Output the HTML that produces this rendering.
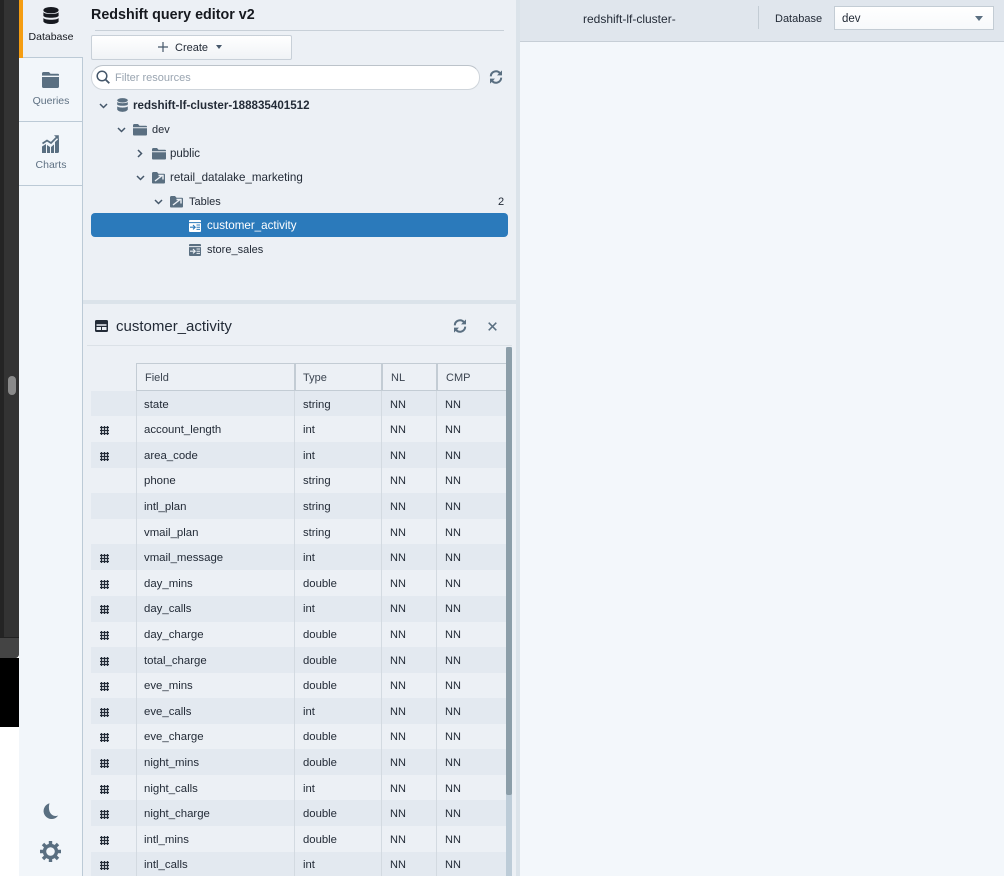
<!DOCTYPE html>
<html><head><meta charset="utf-8"><title>Redshift query editor v2</title>
<style>
html,body{margin:0;padding:0;width:1004px;height:876px;overflow:hidden;background:#fff}
body{position:relative;font-family:"Liberation Sans",sans-serif;font-size:11px;color:#16191f}
.a,.t,svg.a{position:absolute}
.t{white-space:nowrap;line-height:14px;margin-top:1px}
.r{position:absolute;left:91px;width:415px;height:26px}
.s{background:#e3e9f0}
.r span{position:absolute;top:7px;line-height:14px;white-space:nowrap;color:#232b37}
.r.k span{top:6px}
.r .f{left:53px;font-size:11.4px}.r .y{left:212px;font-size:11.3px}.r .n{left:299px}.r .c{left:354px}
.r svg{position:absolute;left:9px;top:10px}
.r.k svg{top:9px}
.h{position:absolute;top:363px;height:26px;border:solid #c3ccd4;border-width:1px 0 2px 0;border-left:1px solid #c3ccd4;background:#ecf0f5}
.h span{position:absolute;left:8px;top:7px;line-height:14px;color:#3b4450}
</style></head><body>
<svg width="0" height="0" style="position:absolute"><defs>
<g id="g"><path d="M1.500 0v9M4.500 0v9M7.500 0v9M0 1.500h9M0 4.500h9M0 7.500h9" stroke="#232b37" stroke-width="1.150" fill="none"/></g>
<g id="f"><path d="M0 1.500C0 .7.500 0 1.300 0H5l1.500 1.700H13c.6 0 1 .4 1 1V3.200H0zM0 4.200h14v6.300c0 .6-.4 1-1 1H1c-.6 0-1-.4-1-1z" fill="#5a6f81"/></g>
<g id="sf"><path d="M0 1.500C0 .7.500 0 1.300 0H5l1.500 1.700H12c.6 0 1 .4 1 1V10.500c0 .6-.4 1-1 1H1c-.6 0-1-.4-1-1z" fill="#5a6f81"/><path d="M3 9 9.500 4M6.500 3.500h4.500V7.500" stroke="#ecf0f5" stroke-width="1.400" fill="none"/></g>
<g id="tb"><rect x="0" y="0" width="12" height="12" rx="1" fill="currentColor"/><path d="M0 2.600h12M7.500 5h3.500M7.500 7.200h3.500M7.500 9.400h3.500" stroke="var(--b)" stroke-width="1"/><path d="M1 7.200h5M4 5l2.200 2.200L4 9.400" stroke="var(--b)" stroke-width="1.100" fill="none"/></g>
<g id="sy"><path d="M1.800 6.400A5.200 5.200 0 0 1 11 3.200M12.200 7.600A5.200 5.200 0 0 1 3 10.800" stroke="#5a6f81" stroke-width="2" fill="none"/><path d="M13 .4v5H8zM1 13.600v-5h5z" fill="#5a6f81"/></g>
</defs></svg>

<!-- dark left strip -->
<div class="a" style="left:0;top:0;width:19px;height:658px;background:#333;border-radius:0 0 4px 0"></div>
<div class="a" style="left:0;top:0;width:4px;height:637px;background:#242424"></div>
<div class="a" style="left:0;top:637px;width:19px;height:1px;background:#222"></div>
<div class="a" style="left:0;top:638px;width:19px;height:20px;background:#444;border-radius:0 0 4px 0"></div>
<div class="a" style="left:0;top:658px;width:19px;height:69px;background:#000"></div>
<div class="a" style="left:8px;top:376px;width:8px;height:19px;background:#8a8a8a;border-radius:4px"></div>

<!-- sidebar -->
<div class="a" style="left:19px;top:0;width:63px;height:876px;background:#f2f6fa"></div>
<div class="a" style="left:82px;top:57px;width:1px;height:819px;background:#bccad6"></div>
<div class="a" style="left:19px;top:0;width:64px;height:57px;background:#ecf0f5"></div>
<div class="a" style="left:19px;top:0;width:4px;height:58px;background:#f59d12"></div>
<div class="a" style="left:23px;top:57px;width:60px;height:1px;background:#bccad6"></div>
<div class="a" style="left:19px;top:121px;width:64px;height:1px;background:#bccad6"></div>
<div class="a" style="left:19px;top:185px;width:64px;height:1px;background:#bccad6"></div>

<svg class="a" style="left:43px;top:7px" width="16" height="18" viewBox="0 0 16 18"><ellipse cx="8" cy="3.200" rx="7.600" ry="3.200" fill="#16191f"/><path d="M.4 5.200C2 7.600 14 7.600 15.600 5.200V9C14 11.400 2 11.400.4 9zM.4 11C2 13.400 14 13.400 15.600 11v3.600C14 17.800 2 17.800.4 14.600z" fill="#16191f"/></svg>
<div class="t" style="left:19px;width:64px;top:29px;text-align:center;font-size:10.500px;color:#16191f">Database</div>
<svg class="a" style="left:42px;top:72px" width="17" height="16" viewBox="0 0 17 16"><path d="M0 1.500C0 .7.600 0 1.400 0H7l1.500 1.800H16c.6 0 1 .4 1 1V3.600H0zM0 5h17v9.500c0 .8-.6 1.500-1.400 1.500H1.400C.6 16 0 15.300 0 14.500z" fill="#5a6f81"/></svg>
<div class="t" style="left:19px;width:64px;top:93px;text-align:center;font-size:10.500px;color:#5f7183">Queries</div>
<svg class="a" style="left:42px;top:135px" width="17" height="18" viewBox="0 0 17 18"><path d="M0 11.500 4 9v9H0zM5 10l3 2v6H5zM9 12l3-2.500V18H9zM13 7l4-3.500V16.500c0 .9-.6 1.500-1.500 1.500H13z" fill="#5a6f81"/><path d="M.5 8.500 5 5.500 9 8l6-6" stroke="#5a6f81" stroke-width="1.700" fill="none"/><path d="M12 .3h4.800v4.700z" fill="#5a6f81"/></svg>
<div class="t" style="left:19px;width:64px;top:157px;text-align:center;font-size:10.500px;color:#5f7183">Charts</div>
<svg class="a" style="left:43px;top:803px" width="16" height="16" viewBox="0 0 16 16"><path d="M6.500.3A8 8 0 1 0 15.200 12.500C10 14.500 4 10 6.500.3z" fill="#5a6f81"/></svg>
<svg class="a" style="left:40px;top:841px" width="21" height="21" viewBox="0 0 21 21"><circle cx="10.500" cy="10.500" r="6" fill="none" stroke="#5a6f81" stroke-width="3.400"/><g stroke="#5a6f81" stroke-width="3.400"><path d="M10.500 0v4M10.500 17v4M0 10.500h4M17 10.500h4M3 3l2.800 2.800M15.200 15.200 18 18M18 3l-2.800 2.800M5.800 15.200 3 18"/></g></svg>

<!-- left panels -->
<div class="a" style="left:83px;top:0;width:433px;height:876px;background:#ecf0f5"></div>
<div class="a" style="left:516px;top:0;width:4px;height:876px;background:#dbe3ea"></div>
<div class="a" style="left:83px;top:300px;width:433px;height:4px;background:#dbe3ea"></div>

<div class="t" style="left:91px;top:6px;font-size:14.300px;line-height:17px;font-weight:bold;color:#16191f">Redshift query editor v2</div>
<div class="a" style="left:95px;top:30px;width:409px;height:1px;background:#c8d0d8"></div>
<div class="a" style="left:91px;top:35px;width:199px;height:23px;background:linear-gradient(#fff,#f0f3f6);border:1px solid #c8d0d8;border-radius:2px"></div>
<svg class="a" style="left:158px;top:42px" width="10" height="10" viewBox="0 0 10 10"><path d="M5 0v10M0 5h10" stroke="#45576a" stroke-width="1.200"/></svg>
<div class="t" style="left:175px;top:40px;color:#232b37">Create</div>
<div class="a" style="left:216px;top:45px;border:solid transparent;border-width:4px 3.500px 0;border-top-color:#45576a"></div>

<div class="a" style="left:91px;top:65px;width:387px;height:23px;background:#fff;border:1px solid #cfd5db;border-top-color:#bcc3ca;border-radius:12px"></div>
<svg class="a" style="left:96px;top:70px" width="14" height="14" viewBox="0 0 14 14"><circle cx="6" cy="6" r="4.800" fill="none" stroke="#45576a" stroke-width="1.500"/><path d="M9.500 9.500 13.300 13.300" stroke="#45576a" stroke-width="1.800"/></svg>
<div class="t" style="left:115px;top:70px;color:#9aa5b1">Filter resources</div>
<svg class="a" style="left:489px;top:70px" width="14" height="14" viewBox="0 0 14 14"><use href="#sy"/></svg>

<!-- tree -->
<svg class="a" style="left:99px;top:103px" width="9" height="6" viewBox="0 0 9 6"><path d="M1 1l3.500 3.500L8 1" stroke="#45576a" stroke-width="1.500" fill="none"/></svg>
<svg class="a" style="left:117px;top:98px" width="11" height="14" viewBox="0 0 11 14"><ellipse cx="5.500" cy="2.300" rx="5.300" ry="2.200" fill="#5a6f81"/><path d="M.2 4C1.500 5.600 9.500 5.600 10.800 4V6.600C9.500 8.200 1.500 8.200.2 6.600zM.2 8.400C1.500 10 9.500 10 10.800 8.400V11.500C9.500 14.600 1.500 14.600.2 11.500z" fill="#5a6f81"/></svg>
<div class="t" style="left:133px;top:98px;font-weight:bold;font-size:11.600px;color:#232b37">redshift-lf-cluster-188835401512</div>

<svg class="a" style="left:117px;top:127px" width="9" height="6" viewBox="0 0 9 6"><path d="M1 1l3.500 3.500L8 1" stroke="#45576a" stroke-width="1.500" fill="none"/></svg>
<svg class="a" style="left:133px;top:124px" width="14" height="12" viewBox="0 0 14 12"><use href="#f"/></svg>
<div class="t" style="left:152px;top:122px;color:#232b37">dev</div>

<svg class="a" style="left:137px;top:149px" width="6" height="9" viewBox="0 0 6 9"><path d="M1 1l3.500 3.500L1 8" stroke="#45576a" stroke-width="1.500" fill="none"/></svg>
<svg class="a" style="left:152px;top:148px" width="14" height="12" viewBox="0 0 14 12"><use href="#f"/></svg>
<div class="t" style="left:170px;top:146px;font-size:11.500px;color:#232b37">public</div>

<svg class="a" style="left:136px;top:175px" width="9" height="6" viewBox="0 0 9 6"><path d="M1 1l3.500 3.500L8 1" stroke="#45576a" stroke-width="1.500" fill="none"/></svg>
<svg class="a" style="left:152px;top:172px" width="13" height="12" viewBox="0 0 13 12"><use href="#sf"/></svg>
<div class="t" style="left:170px;top:170px;font-size:11.600px;color:#232b37">retail_datalake_marketing</div>

<svg class="a" style="left:154px;top:199px" width="9" height="6" viewBox="0 0 9 6"><path d="M1 1l3.500 3.500L8 1" stroke="#45576a" stroke-width="1.500" fill="none"/></svg>
<svg class="a" style="left:170px;top:196px" width="13" height="12" viewBox="0 0 13 12"><use href="#sf"/></svg>
<div class="t" style="left:189px;top:194px;color:#232b37">Tables</div>
<div class="t" style="left:498px;top:194px;color:#232b37">2</div>

<div class="a" style="left:91px;top:213px;width:417px;height:24px;background:#2b7abb;border-radius:4px"></div>
<svg class="a" style="left:189px;top:220px;color:#fff;--b:#2b7abb" width="12" height="12" viewBox="0 0 12 12"><use href="#tb"/></svg>
<div class="t" style="left:207px;top:218px;font-size:11.600px;color:#fff">customer_activity</div>
<svg class="a" style="left:189px;top:244px;color:#5a6f81;--b:#ecf0f5" width="12" height="12" viewBox="0 0 12 12"><use href="#tb"/></svg>
<div class="t" style="left:207px;top:242px;color:#232b37">store_sales</div>

<!-- details header -->
<svg class="a" style="left:95px;top:320px" width="13" height="12" viewBox="0 0 13 12"><rect width="13" height="12" rx="1.500" fill="#232b37"/><path d="M1.500 4.200h10v1.600h-10zM1.500 7h4.500v3H1.500zM7 7h4.500v3H7z" fill="#ecf0f5"/></svg>
<div class="t" style="left:116px;top:318px;font-size:15px;line-height:16px;color:#232b37">customer_activity</div>
<svg class="a" style="left:453px;top:319px" width="14" height="14" viewBox="0 0 14 14"><use href="#sy"/></svg>
<svg class="a" style="left:488px;top:322px" width="9" height="9" viewBox="0 0 9 9"><path d="M.7.7l7.600 7.600M8.300.7.700 8.300" stroke="#5a6f81" stroke-width="1.500"/></svg>
<div class="a" style="left:87px;top:345px;width:425px;height:1px;background:#dbe1e7"></div>

<!-- table -->
<div class="h" style="left:136px;width:157px"><span>Field</span></div>
<div class="h" style="left:294px;width:85px;border-left-width:2px"><span style="left:7px">Type</span></div>
<div class="h" style="left:381px;width:53px;border-left-width:2px"><span>NL</span></div>
<div class="h" style="left:436px;width:69px;border-left-width:2px;border-right:1px solid #c3ccd4"><span>CMP</span></div>

<div class="r s" style="top:391px;height:25px"><span class="f">state</span><span class="y">string</span><span class="n">NN</span><span class="c">NN</span></div>
<div class="r" style="top:416px"><svg width="9" height="9"><use href="#g"/></svg><span class="f">account_length</span><span class="y">int</span><span class="n">NN</span><span class="c">NN</span></div>
<div class="r s" style="top:442px"><svg width="9" height="9"><use href="#g"/></svg><span class="f">area_code</span><span class="y">int</span><span class="n">NN</span><span class="c">NN</span></div>
<div class="r k" style="top:468px"><span class="f">phone</span><span class="y">string</span><span class="n">NN</span><span class="c">NN</span></div>
<div class="r s" style="top:493px"><span class="f">intl_plan</span><span class="y">string</span><span class="n">NN</span><span class="c">NN</span></div>
<div class="r" style="top:519px"><span class="f">vmail_plan</span><span class="y">string</span><span class="n">NN</span><span class="c">NN</span></div>
<div class="r s" style="top:544px"><svg width="9" height="9"><use href="#g"/></svg><span class="f">vmail_message</span><span class="y">int</span><span class="n">NN</span><span class="c">NN</span></div>
<div class="r" style="top:570px"><svg width="9" height="9"><use href="#g"/></svg><span class="f">day_mins</span><span class="y">double</span><span class="n">NN</span><span class="c">NN</span></div>
<div class="r s k" style="top:596px"><svg width="9" height="9"><use href="#g"/></svg><span class="f">day_calls</span><span class="y">int</span><span class="n">NN</span><span class="c">NN</span></div>
<div class="r" style="top:621px"><svg width="9" height="9"><use href="#g"/></svg><span class="f">day_charge</span><span class="y">double</span><span class="n">NN</span><span class="c">NN</span></div>
<div class="r s" style="top:647px"><svg width="9" height="9"><use href="#g"/></svg><span class="f">total_charge</span><span class="y">double</span><span class="n">NN</span><span class="c">NN</span></div>
<div class="r" style="top:672px"><svg width="9" height="9"><use href="#g"/></svg><span class="f">eve_mins</span><span class="y">double</span><span class="n">NN</span><span class="c">NN</span></div>
<div class="r s" style="top:698px"><svg width="9" height="9"><use href="#g"/></svg><span class="f">eve_calls</span><span class="y">int</span><span class="n">NN</span><span class="c">NN</span></div>
<div class="r k" style="top:724px"><svg width="9" height="9"><use href="#g"/></svg><span class="f">eve_charge</span><span class="y">double</span><span class="n">NN</span><span class="c">NN</span></div>
<div class="r s" style="top:749px"><svg width="9" height="9"><use href="#g"/></svg><span class="f">night_mins</span><span class="y">double</span><span class="n">NN</span><span class="c">NN</span></div>
<div class="r" style="top:775px"><svg width="9" height="9"><use href="#g"/></svg><span class="f">night_calls</span><span class="y">int</span><span class="n">NN</span><span class="c">NN</span></div>
<div class="r s" style="top:800px"><svg width="9" height="9"><use href="#g"/></svg><span class="f">night_charge</span><span class="y">double</span><span class="n">NN</span><span class="c">NN</span></div>
<div class="r" style="top:826px"><svg width="9" height="9"><use href="#g"/></svg><span class="f">intl_mins</span><span class="y">double</span><span class="n">NN</span><span class="c">NN</span></div>
<div class="r s k" style="top:852px;height:24px"><svg width="9" height="9"><use href="#g"/></svg><span class="f">intl_calls</span><span class="y">int</span><span class="n">NN</span><span class="c">NN</span></div>

<div class="a" style="left:136px;top:391px;width:1px;height:485px;background:#d3dae1"></div>
<div class="a" style="left:294px;top:391px;width:1px;height:485px;background:#d3dae1"></div>
<div class="a" style="left:381px;top:391px;width:1px;height:485px;background:#d3dae1"></div>
<div class="a" style="left:436px;top:391px;width:1px;height:485px;background:#d3dae1"></div>

<div class="a" style="left:506px;top:347px;width:6px;height:529px;background:#bdccd8"></div>
<div class="a" style="left:506px;top:347px;width:6px;height:448px;background:#8c9ea9;border-radius:2px"></div>

<!-- right pane -->
<div class="a" style="left:520px;top:0;width:484px;height:876px;background:#f3f7fb"></div>
<div class="a" style="left:520px;top:0;width:484px;height:41px;background:#e0e6ed;border-bottom:1px solid #c6ced6"></div>
<div class="t" style="left:583px;top:11px;font-size:12px;color:#232b37">redshift-lf-cluster-</div>
<div class="a" style="left:758px;top:6px;width:1px;height:23px;background:#c3ccd4"></div>
<div class="t" style="left:775px;top:11px;color:#232b37">Database</div>
<div class="a" style="left:834px;top:6px;width:158px;height:22px;background:linear-gradient(#fff,#f7f9fb);border:1px solid #c3ccd4"></div>
<div class="t" style="left:842px;top:11px;font-size:11.500px;color:#232b37">dev</div>
<div class="a" style="left:975px;top:16px;border:solid transparent;border-width:5px 4px 0;border-top-color:#5a6f81"></div>
</body></html>
